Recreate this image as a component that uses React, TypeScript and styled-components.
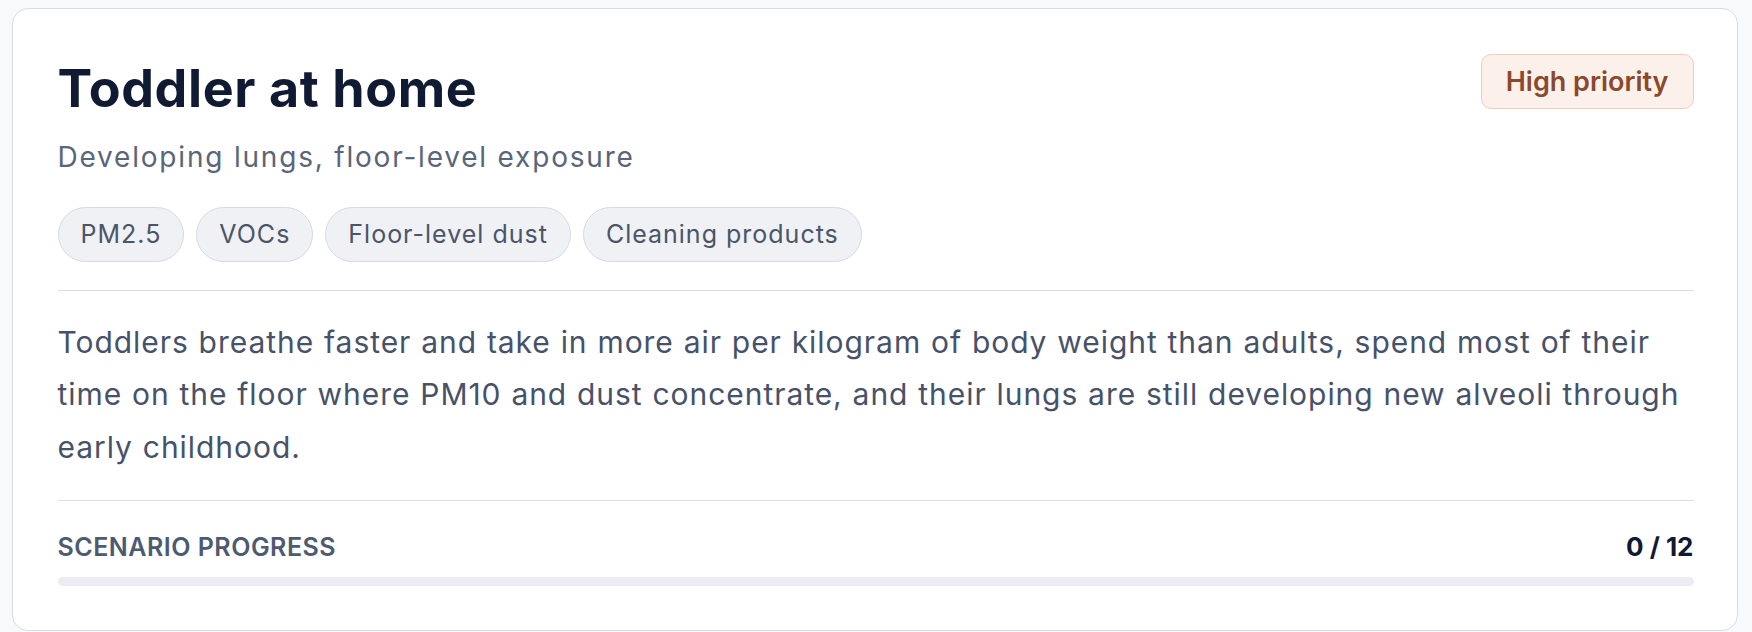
import React from "react";
import styled, { createGlobalStyle } from "styled-components";

const GlobalStyle = createGlobalStyle`
  html, body {
    margin: 0;
    padding: 0;
    background: #f8f9fb;
  }
  body {
    font-family: Inter, "Noto Sans", sans-serif;
    -webkit-font-smoothing: antialiased;
  }
`;

const Page = styled.div`
  padding: 8px 14px 2px 12px;
`;

const Card = styled.section`
  background: #ffffff;
  border: 1.5px solid #d6dce6;
  border-radius: 16px;
  padding: 44.5px 43.5px 44.5px 44.5px;
  display: flex;
  flex-direction: column;
`;

const Header = styled.div`
  display: flex;
  justify-content: space-between;
  align-items: flex-start;
`;

const TitleBlock = styled.div`
  display: flex;
  flex-direction: column;
  padding-top: 5px;
`;

const Title = styled.h2`
  margin: 0;
  font-size: 52px;
  line-height: 60px;
  font-weight: 700;
  color: #111a33;
  letter-spacing: 0.6px;
`;

const Subtitle = styled.p`
  margin: 20px 0 0;
  font-size: 28px;
  line-height: 36px;
  letter-spacing: 1.8px;
  color: #5b6579;
`;

const Badge = styled.span`
  box-sizing: border-box;
  height: 55px;
  padding: 0 24px;
  display: inline-flex;
  align-items: center;
  border-radius: 10px;
  background: #fcf0ea;
  border: 1.5px solid #f0cdb9;
  color: #8c482a;
  font-size: 27px;
  font-weight: 600;
`;

const Tags = styled.ul`
  list-style: none;
  margin: 32px 0 0;
  padding: 0;
  display: flex;
  gap: 12px;
`;

const Tag = styled.li`
  box-sizing: border-box;
  height: 55px;
  padding: 0 22px;
  display: flex;
  align-items: center;
  border-radius: 28px;
  background: #eff1f5;
  border: 1.5px solid #d5dae3;
  color: #4b5568;
  font-size: 25px;
  letter-spacing: 1px;
`;

const Divider = styled.hr<{ $top: number }>`
  margin: ${(p) => p.$top}px 0 0;
  border: 0;
  border-top: 1.5px solid #dadee6;
`;

const Body = styled.p`
  margin: 25px 0 0;
  font-size: 30px;
  line-height: 52.5px;
  letter-spacing: 0.95px;
  word-spacing: 0.5px;
  color: #475269;
`;

const ProgressHead = styled.div`
  margin-top: 30px;
  display: flex;
  justify-content: space-between;
  align-items: center;
  line-height: 32px;
`;

const ProgressLabel = styled.span`
  font-size: 25px;
  font-weight: 600;
  letter-spacing: 0.5px;
  text-transform: uppercase;
  color: #4d5a70;
`;

const ProgressCount = styled.span`
  font-size: 26px;
  font-weight: 700;
  color: #111a33;
`;

const Track = styled.div`
  margin-top: 14px;
  height: 9px;
  border-radius: 5px;
  background: #ecedf2;
  overflow: hidden;
`;

const Fill = styled.div`
  height: 100%;
  background: #8c482a;
`;

const scenario = {
  title: "Toddler at home",
  subtitle: "Developing lungs, floor-level exposure",
  priority: "High priority",
  tags: ["PM2.5", "VOCs", "Floor-level dust", "Cleaning products"],
  body:
    "Toddlers breathe faster and take in more air per kilogram of body weight than adults, spend most of their time on the floor where PM10 and dust concentrate, and their lungs are still developing new alveoli through early childhood.",
  done: 0,
  total: 12,
};

export default function App() {
  const pct = (scenario.done / scenario.total) * 100;
  return (
    <>
      <GlobalStyle />
      <Page>
        <Card>
          <Header>
            <TitleBlock>
              <Title>{scenario.title}</Title>
              <Subtitle>{scenario.subtitle}</Subtitle>
            </TitleBlock>
            <Badge>{scenario.priority}</Badge>
          </Header>
          <Tags>
            {scenario.tags.map((t) => (
              <Tag key={t}>{t}</Tag>
            ))}
          </Tags>
          <Divider $top={28} />
          <Body>{scenario.body}</Body>
          <Divider $top={26.5} />
          <ProgressHead>
            <ProgressLabel>Scenario progress</ProgressLabel>
            <ProgressCount>
              {scenario.done} / {scenario.total}
            </ProgressCount>
          </ProgressHead>
          <Track>
            <Fill style={{ width: `${pct}%` }} />
          </Track>
        </Card>
      </Page>
    </>
  );
}
